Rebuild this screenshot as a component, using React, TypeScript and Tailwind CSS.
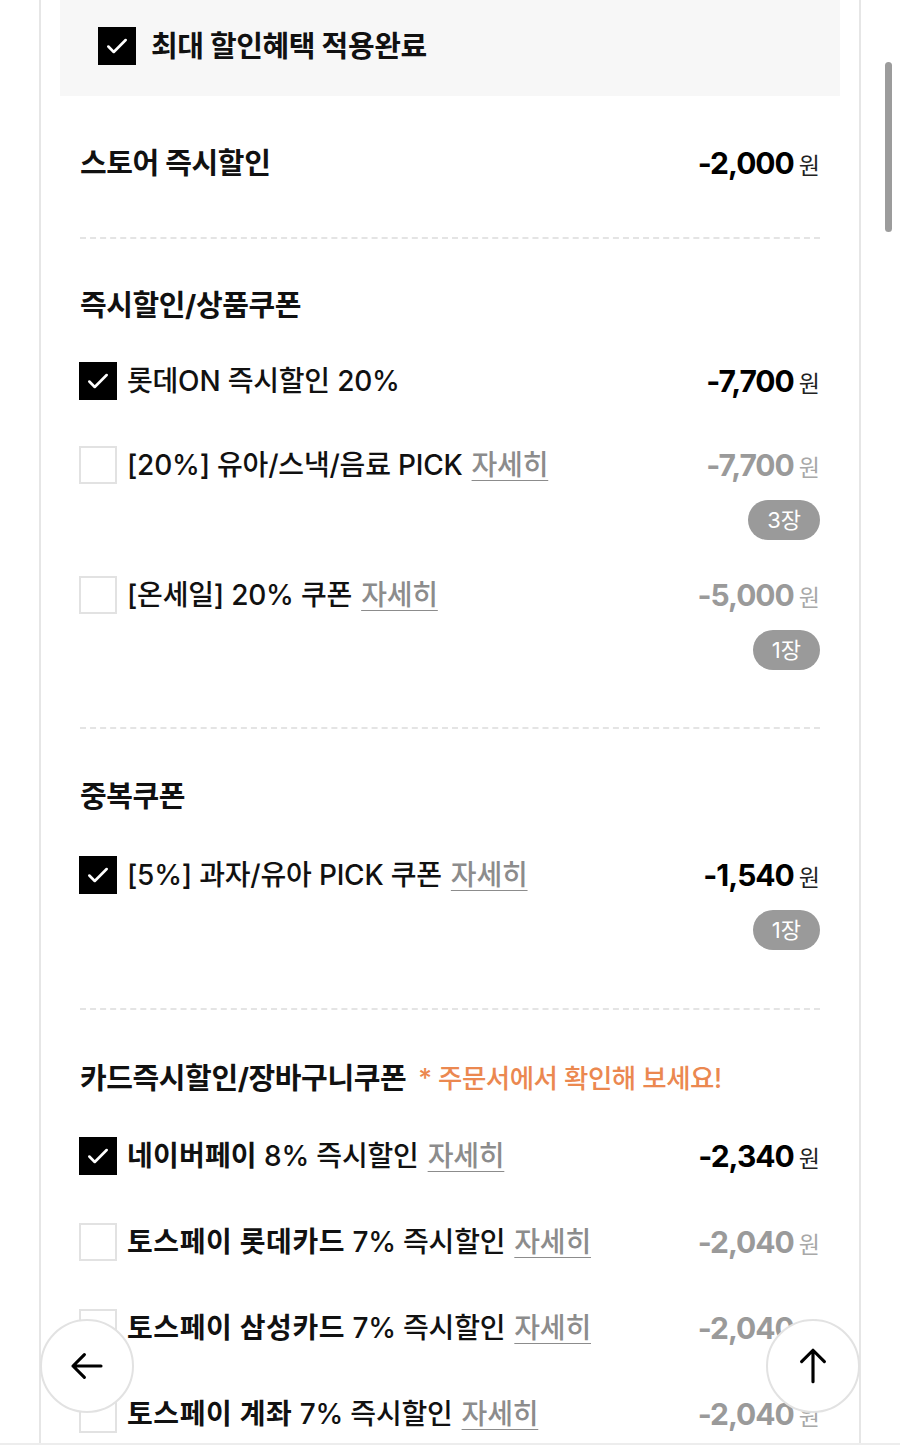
import React from 'react';

const FONT = { fontFamily: 'Inter, "Noto Sans CJK KR", sans-serif' };

const CheckBox = ({ checked }: { checked: boolean }) =>
  checked ? (
    <div className="w-[38px] h-[38px] bg-black flex items-center justify-center shrink-0">
      <svg width="26" height="26" viewBox="0 0 24 24" fill="none" stroke="white" strokeWidth="2.4" strokeLinecap="round" strokeLinejoin="round">
        <path d="M4 12.5l5 5L20 6.5" />
      </svg>
    </div>
  ) : (
    <div className="w-[38px] h-[38px] bg-white border-2 border-[#e2e2e2] shrink-0" />
  );

const More = () => <span className="text-[#8c8c8c] underline underline-offset-[5px] decoration-1 ml-[9px]">자세히</span>;

const Price = ({ value, active }: { value: string; active: boolean }) => (
  <div className={`flex items-baseline gap-[5px] ${active ? 'text-black' : 'text-[#9a9a9a]'}`}>
    <span className="text-[30px] font-bold tracking-[-1px]">{value}</span>
    <span className={`text-[23px] ${active ? 'text-[#222]' : 'text-[#a8a8a8]'}`}>원</span>
  </div>
);

const Badge = ({ count }: { count: string }) => (
  <div className="mt-[16px] h-[40px] px-[19px] rounded-full bg-[#9a9a9a] text-white text-[22px] flex items-center justify-center">
    {count}
  </div>
);

interface RowProps {
  checked: boolean;
  label: React.ReactNode;
  value: string;
  badge?: string;
  className?: string;
}

const Row = ({ checked, label, value, badge, className = '' }: RowProps) => (
  <div className={`flex justify-between ${className}`}>
    <div className="flex items-center h-[38px] gap-[10px] -ml-[1px]">
      <CheckBox checked={checked} />
      <div className="text-[28px] font-medium text-[#111] tracking-[-0.2px] whitespace-nowrap">{label}</div>
    </div>
    <div className="flex flex-col items-end">
      <div className="h-[38px] flex items-center">
        <Price value={value} active={checked} />
      </div>
      {badge && <Badge count={badge} />}
    </div>
  </div>
);

const Title = ({ children }: { children: React.ReactNode }) => (
  <div className="h-[38px] flex items-center text-[29px] font-bold text-[#111] tracking-[-0.4px] whitespace-nowrap">{children}</div>
);

const Dashed = () => <div className="border-t-2 border-dashed border-[#e4e4e4]" />;

export default function App() {
  return (
    <div className="relative w-[900px] h-[1450px] bg-white overflow-hidden leading-none" style={FONT}>
      <div className="h-[1445px] border-b-2 border-[#ededed] overflow-hidden">
        <div className="ml-[39px] w-[822px] h-full border-x-2 border-[#e6e6e6] px-[19px]">
          {/* applied banner */}
          <div className="h-[96px] bg-[#f7f7f7] flex items-center pl-[38px] gap-[15px] pb-[4px]">
            <CheckBox checked />
            <span className="text-[29px] font-bold text-[#111] tracking-[-0.4px]">최대 할인혜택 적용완료</span>
          </div>

          <div className="px-[20px]">
            {/* store */}
            <div className="pt-[48px] pb-[55px] flex justify-between">
              <Title>스토어 즉시할인</Title>
              <div className="h-[38px] flex items-center">
                <Price value="-2,000" active />
              </div>
            </div>
            <Dashed />

            {/* instant / product coupon */}
            <div className="pt-[47px] pb-[57px]">
              <Title>즉시할인/상품쿠폰</Title>
              <Row className="mt-[38px]" checked label="롯데ON 즉시할인 20%" value="-7,700" />
              <Row className="mt-[46px]" checked={false} label={<>[20%] 유아/스낵/음료 PICK<More /></>} value="-7,700" badge="3장" />
              <Row className="mt-[36px]" checked={false} label={<>[온세일] 20% 쿠폰<More /></>} value="-5,000" badge="1장" />
            </div>
            <Dashed />

            {/* duplicate coupon */}
            <div className="pt-[48px] pb-[58px]">
              <Title>중복쿠폰</Title>
              <Row className="mt-[41px]" checked label={<>[5%] 과자/유아 PICK 쿠폰<More /></>} value="-1,540" badge="1장" />
            </div>
            <Dashed />

            {/* card */}
            <div className="pt-[49px]">
              <div className="flex items-center gap-[12px]">
                <Title>카드즉시할인/장바구니쿠폰</Title>
                <span className="text-[26.5px] font-medium text-[#eb8850] tracking-[-0.5px] whitespace-nowrap">* 주문서에서 확인해 보세요!</span>
              </div>
              <Row className="mt-[40px]" checked label={<><b className="tracking-[0.2px]">네이버페이</b> 8% 즉시할인<More /></>} value="-2,340" />
              <Row className="mt-[48px]" checked={false} label={<><b className="tracking-[0.6px]">토스페이 롯데카드</b> 7% 즉시할인<More /></>} value="-2,040" />
              <Row className="mt-[48px]" checked={false} label={<><b className="tracking-[0.6px]">토스페이 삼성카드</b> 7% 즉시할인<More /></>} value="-2,040" />
              <Row className="mt-[48px]" checked={false} label={<><b className="tracking-[0.6px]">토스페이 계좌</b> 7% 즉시할인<More /></>} value="-2,040" />
            </div>
          </div>
        </div>
      </div>

      {/* scrollbar */}
      <div className="absolute left-[885px] top-[62px] w-[7px] h-[170px] rounded-full bg-[#9c9c9c]" />

      {/* floating buttons */}
      <button className="absolute left-[40px] top-[1319px] w-[94px] h-[94px] rounded-full bg-white border-2 border-[#e2e2e2] flex items-center justify-center">
        <svg width="42" height="42" viewBox="0 0 24 24" fill="none" stroke="black" strokeWidth="1.8" strokeLinecap="round" strokeLinejoin="round">
          <path d="M20 12H4M10.5 5.5L4 12l6.5 6.5" />
        </svg>
      </button>
      <button className="absolute left-[766px] top-[1319px] w-[94px] h-[94px] rounded-full bg-white border-2 border-[#e2e2e2] flex items-center justify-center">
        <svg width="42" height="42" viewBox="0 0 24 24" fill="none" stroke="black" strokeWidth="1.8" strokeLinecap="round" strokeLinejoin="round">
          <path d="M12 21V3M5.5 9.5L12 3l6.5 6.5" />
        </svg>
      </button>
    </div>
  );
}
